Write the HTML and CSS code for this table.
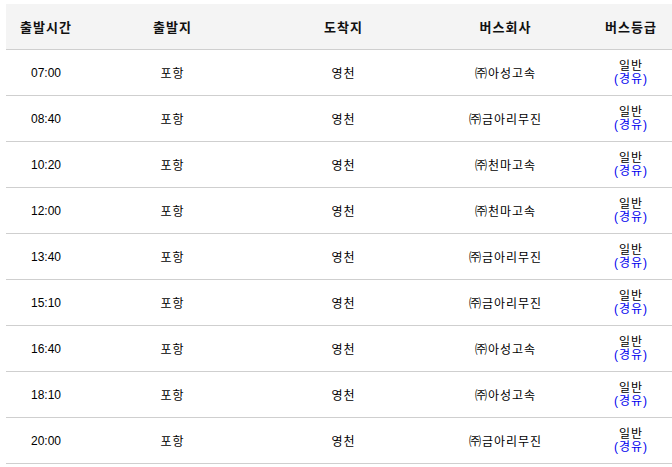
FILE: index.html
```html
<!DOCTYPE html>
<html lang="ko">
<head>
<meta charset="utf-8">
<title>버스 시간표</title>
<link rel="stylesheet" href="styles.css">
</head>
<body>
<div class="wrap">
<table class="timetable">
  <colgroup>
    <col class="c1"><col class="c2"><col class="c3"><col class="c4"><col class="c5">
  </colgroup>
  <thead>
    <tr><th>출발시간</th><th>출발지</th><th>도착지</th><th>버스회사</th><th>버스등급</th></tr>
  </thead>
  <tbody>
    <tr><td class="time">07:00</td><td>포항</td><td>영천</td><td>㈜아성고속</td><td class="grade">일반<br><span class="via">(경유)</span></td></tr>
    <tr><td class="time">08:40</td><td>포항</td><td>영천</td><td>㈜금아리무진</td><td class="grade">일반<br><span class="via">(경유)</span></td></tr>
    <tr><td class="time">10:20</td><td>포항</td><td>영천</td><td>㈜천마고속</td><td class="grade">일반<br><span class="via">(경유)</span></td></tr>
    <tr><td class="time">12:00</td><td>포항</td><td>영천</td><td>㈜천마고속</td><td class="grade">일반<br><span class="via">(경유)</span></td></tr>
    <tr><td class="time">13:40</td><td>포항</td><td>영천</td><td>㈜금아리무진</td><td class="grade">일반<br><span class="via">(경유)</span></td></tr>
    <tr><td class="time">15:10</td><td>포항</td><td>영천</td><td>㈜금아리무진</td><td class="grade">일반<br><span class="via">(경유)</span></td></tr>
    <tr><td class="time">16:40</td><td>포항</td><td>영천</td><td>㈜아성고속</td><td class="grade">일반<br><span class="via">(경유)</span></td></tr>
    <tr><td class="time">18:10</td><td>포항</td><td>영천</td><td>㈜아성고속</td><td class="grade">일반<br><span class="via">(경유)</span></td></tr>
    <tr><td class="time">20:00</td><td>포항</td><td>영천</td><td>㈜금아리무진</td><td class="grade">일반<br><span class="via">(경유)</span></td></tr>
  </tbody>
</table>
</div>
</body>
</html>
```
FILE: styles.css
```css
html, body {
  margin: 0;
  padding: 0;
  background: #fff;
  overflow: hidden;
}
body {
  font-family: "Liberation Sans", "Noto Sans CJK KR", sans-serif;
  font-size: 12px;
  color: #000;
}
.wrap {
  margin: 4px 0 0 6px;
  width: 666px;
  overflow: hidden;
}
.timetable {
  width: 673px;
  border-collapse: collapse;
  table-layout: fixed;
}
.c1 { width: 80px; }
.c2 { width: 173px; }
.c3 { width: 169px; }
.c4 { width: 155px; }
.c5 { width: 96px; }
.timetable th {
  height: 45px;
  padding: 0;
  background: #f4f4f4;
  font-weight: bold;
  font-size: 13px;
  letter-spacing: 1px;
  color: #111;
  text-align: center;
  vertical-align: middle;
  border-bottom: 1px solid #cfcfcf;
}
.timetable td {
  height: 45px;
  padding: 0;
  text-align: center;
  vertical-align: middle;
  border-bottom: 1px solid #cfcfcf;
  letter-spacing: 1px;
}
.timetable td.time {
  letter-spacing: 0;
}
.grade {
  line-height: 13px;
}
.via {
  color: #0000ee;
}
```
